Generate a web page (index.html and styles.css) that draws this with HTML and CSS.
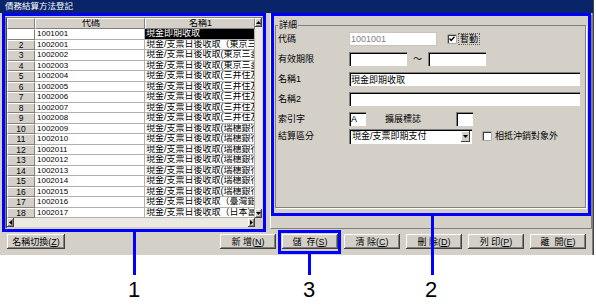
FILE: index.html
```html
<!DOCTYPE html>
<html lang="zh-Hant">
<head>
  <meta charset="UTF-8">
  <title>債務結算方法登記</title>
  <link rel="stylesheet" href="styles.css">
</head>
<body>
<div class="window">
  <div class="titlebar">債務結算方法登記</div>
  <div class="workspace">
    <div class="grid">
      <div class="grid-body">
        <div class="sheet">
          <div class="row head"><div class="cell rh"></div><div class="cell hd code">代碼</div><div class="cell hd name">名稱1</div></div>
          <div class="row current"><div class="cell rh"></div><div class="cell code">1001001</div><div class="cell name">現金即期收取</div></div>
          <div class="row"><div class="cell rh">2</div><div class="cell code">1002001</div><div class="cell name">現金/支票日後收取（東京三菱銀行）</div></div>
          <div class="row"><div class="cell rh">3</div><div class="cell code">1002002</div><div class="cell name">現金/支票日後收取(東京三菱銀行)</div></div>
          <div class="row"><div class="cell rh">4</div><div class="cell code">1002003</div><div class="cell name">現金/支票日後收取(東京三菱銀行)</div></div>
          <div class="row"><div class="cell rh">5</div><div class="cell code">1002004</div><div class="cell name">現金/支票日後收取(三井住友銀行)</div></div>
          <div class="row"><div class="cell rh">6</div><div class="cell code">1002005</div><div class="cell name">現金/支票日後收取(三井住友銀行)</div></div>
          <div class="row"><div class="cell rh">7</div><div class="cell code">1002006</div><div class="cell name">現金/支票日後收取(三井住友銀行)</div></div>
          <div class="row"><div class="cell rh">8</div><div class="cell code">1002007</div><div class="cell name">現金/支票日後收取(三井住友銀行)</div></div>
          <div class="row"><div class="cell rh">9</div><div class="cell code">1002008</div><div class="cell name">現金/支票日後收取(三井住友銀行)</div></div>
          <div class="row"><div class="cell rh">10</div><div class="cell code">1002009</div><div class="cell name">現金/支票日後收取(瑞穗銀行)</div></div>
          <div class="row"><div class="cell rh">11</div><div class="cell code">1002010</div><div class="cell name">現金/支票日後收取(瑞穗銀行)</div></div>
          <div class="row"><div class="cell rh">12</div><div class="cell code">1002011</div><div class="cell name">現金/支票日後收取(瑞穗銀行)</div></div>
          <div class="row"><div class="cell rh">13</div><div class="cell code">1002012</div><div class="cell name">現金/支票日後收取(瑞穗銀行)</div></div>
          <div class="row"><div class="cell rh">14</div><div class="cell code">1002013</div><div class="cell name">現金/支票日後收取(瑞穗銀行)</div></div>
          <div class="row"><div class="cell rh">15</div><div class="cell code">1002014</div><div class="cell name">現金/支票日後收取(瑞穗銀行)</div></div>
          <div class="row"><div class="cell rh">16</div><div class="cell code">1002015</div><div class="cell name">現金/支票日後收取(瑞穗銀行)</div></div>
          <div class="row"><div class="cell rh">17</div><div class="cell code">1002016</div><div class="cell name">現金/支票日後收取（臺灣銀行）</div></div>
          <div class="row"><div class="cell rh">18</div><div class="cell code">1002017</div><div class="cell name">現金/支票日後收取（日本富士銀行）</div></div>
        </div>
        <div class="vscroll">
          <div class="sb-btn"><svg width="5" height="3" viewBox="0 0 5 3"><polygon points="2.5,0 5,3 0,3" fill="#000"/></svg></div>
          <div class="sb-track"></div>
          <div class="sb-btn"><svg width="5" height="3" viewBox="0 0 5 3"><polygon points="0,0 5,0 2.5,3" fill="#000"/></svg></div>
        </div>
      </div>
      <div class="hscroll">
        <div class="sb-btn"><svg width="3" height="5" viewBox="0 0 3 5"><polygon points="3,0 3,5 0,2.5" fill="#000"/></svg></div>
        <div class="sb-track"></div>
        <div class="sb-btn"><svg width="3" height="5" viewBox="0 0 3 5"><polygon points="0,0 3,2.5 0,5" fill="#000"/></svg></div>
        <div class="sb-corner"></div>
      </div>
    </div>

    <div class="detail">
      <fieldset class="group">
        <legend>詳細</legend>
        <div class="field">
          <label class="lbl">代碼</label>
          <input class="box box-code" type="text" value="1001001" readonly>
          <span class="check"><svg width="6" height="6" viewBox="0 0 6 6"><polyline points="0.5,2.5 2.2,4.5 5.5,0.8" fill="none" stroke="#000" stroke-width="1.4"/></svg></span>
          <span class="check-label focus">暫勤</span>
        </div>
        <div class="field">
          <label class="lbl">有效期限</label>
          <input class="box box-date" type="text">
          <span class="tilde">～</span>
          <input class="box box-date" type="text">
        </div>
        <div class="field">
          <label class="lbl">名稱1</label>
          <input class="box box-wide" type="text" value="現金即期收取">
        </div>
        <div class="field">
          <label class="lbl">名稱2</label>
          <input class="box box-wide" type="text">
        </div>
        <div class="field">
          <label class="lbl">索引字</label>
          <input class="box box-char" type="text" value="A">
          <label class="lbl-inline">擴展標誌</label>
          <input class="box box-char" type="text">
        </div>
        <div class="field tight">
          <label class="lbl">結算區分</label>
          <div class="combo">
            <span class="combo-text">現金/支票即期支付</span>
            <span class="combo-btn"><svg width="5" height="3" viewBox="0 0 5 3"><polygon points="0,0 5,0 2.5,3" fill="#000"/></svg></span>
          </div>
          <span class="check"></span>
          <span class="check-label">相抵沖銷對象外</span>
        </div>
      </fieldset>
    </div>
  </div>

  <div class="toolbar">
    <button class="btn btn-switch">名稱切換(<u>Z</u>)</button>
    <div class="actions">
      <button class="btn">新&nbsp;增(<u>N</u>)</button>
      <button class="btn">儲&nbsp;&nbsp;存(<u>S</u>)</button>
      <button class="btn">清&nbsp;除(<u>C</u>)</button>
      <button class="btn">刪&nbsp;除(<u>D</u>)</button>
      <button class="btn">列&nbsp;印(<u>P</u>)</button>
      <button class="btn">離&nbsp;&nbsp;開(<u>E</u>)</button>
    </div>
  </div>
</div>

<!-- annotation callouts -->
<div class="mark mark-grid"></div>
<div class="mark mark-detail"></div>
<div class="mark mark-save"></div>
<div class="stem stem-1"></div>
<div class="stem stem-2"></div>
<div class="stem stem-3"></div>
<div class="num num-1">1</div>
<div class="num num-2">2</div>
<div class="num num-3">3</div>
</body>
</html>
```

FILE: styles.css
```css
* {
  box-sizing: border-box;
}

body {
  margin: 0;
  width: 596px;
  height: 305px;
  position: relative;
  overflow: hidden;
  background-color: #ffffff;
  font-family: "Liberation Sans", "Noto Sans CJK TC", sans-serif;
  font-size: 9px;
  color: #000000;
}

.window {
  width: 594px;
  height: 255px;
  background-color: #d4d0c8;
  border-right: 1px solid #404040;
  box-shadow: inset -1px 0 #808080;
}

.titlebar {
  height: 13px;
  padding-left: 5px;
  background-color: #0a246a;
  color: #ffffff;
  font-size: 8.5px;
  line-height: 13px;
}

.workspace {
  display: flex;
  align-items: flex-start;
  height: 216px;
  padding-left: 5px;
}

/* Grid */
.grid {
  margin-top: 4px;
  width: 258px;
  height: 211px;
  padding: 1px 1px 1px 2px;
  background-color: #ffffff;
  box-shadow: inset 1px 1px #808080, inset 2px 0 #404040, inset -1px -1px #d4d0c8;
  display: flex;
  flex-direction: column;
}

.grid-body {
  display: flex;
  height: 200px;
}

.sheet {
  width: 248px;
  overflow: hidden;
}

.row {
  display: flex;
  height: 10.5px;
}

.row.head {
  height: 11px;
}

.cell {
  border-right: 1px solid #b0b0b0;
  border-bottom: 1px solid #b0b0b0;
  padding-left: 2px;
  line-height: 9.5px;
  white-space: nowrap;
  overflow: hidden;
}

.rh {
  width: 28px;
  padding-left: 0;
  text-align: center;
  font-size: 8.5px;
  background-color: #d4d0c8;
  border-top: 1px solid #ffffff;
  border-left: 1px solid #ffffff;
  border-right-color: #808080;
  border-bottom-color: #808080;
  line-height: 8.5px;
}

.code {
  width: 110px;
  font-size: 8px;
}

.name {
  flex: 1;
  padding-left: 1px;
}

.hd {
  text-align: center;
  background-color: #d4d0c8;
  border-top: 1px solid #ffffff;
  border-left: 1px solid #ffffff;
  border-right-color: #808080;
  border-bottom-color: #808080;
  font-size: 9px;
  line-height: 9px;
}

.current .rh {
  background-color: #ffffff;
}

.current .name {
  background-color: #000000;
  color: #ffffff;
}

/* Scrollbars */
.vscroll {
  width: 7px;
  display: flex;
  flex-direction: column;
}

.hscroll {
  height: 9px;
  display: flex;
}

.sb-track {
  flex: 1;
  background-color: #ece9e3;
}

.sb-btn {
  display: flex;
  align-items: center;
  justify-content: center;
  background-color: #d4d0c8;
  box-shadow: inset -1px -1px #404040, inset 1px 1px #ffffff, inset -2px -2px #808080;
}

.vscroll .sb-btn {
  height: 9px;
}

.hscroll .sb-btn {
  width: 7px;
}

.sb-corner {
  width: 7px;
  background-color: #d4d0c8;
}

/* Detail panel */
.detail {
  margin-top: 1px;
  margin-left: 7px;
  width: 322px;
  height: 215px;
  border: 1px solid;
  border-color: #ffffff #808080 #808080 #ffffff;
}

.group {
  margin: 5px 5px 0 4px;
  height: 188px;
  padding: 2px 0 0 2px;
  border: 1px solid #808080;
  box-shadow: 1px 1px 0 #ffffff;
  min-width: 0;
}

.group legend {
  padding: 0 1px;
  line-height: 10px;
}

.field {
  display: flex;
  align-items: center;
  height: 14px;
  margin-bottom: 6px;
  line-height: 10px;
}

.field.tight {
  margin-top: -3px;
}

.lbl {
  width: 71px;
  flex-shrink: 0;
}

.lbl-inline {
  margin-left: 19px;
  width: 71px;
}

.box {
  height: 14px;
  padding: 0 2px;
  border: none;
  outline: none;
  font-family: inherit;
  font-size: 9px;
  color: #000000;
  background-color: #ffffff;
  box-shadow: inset 1px 1px #808080, inset 2px 2px #000000, inset -1px -1px #ffffff;
}

.box-code {
  width: 88px;
  color: #808080;
  box-shadow: inset 0 0 0 1px #c8c4bc;
}

.box-date {
  width: 58px;
}

.box-wide {
  width: 231px;
}

.box-char {
  width: 17px;
}

.tilde {
  width: 21px;
  text-align: center;
}

.check {
  width: 8px;
  height: 8px;
  margin-left: 11px;
  display: flex;
  align-items: center;
  justify-content: center;
  background-color: #ffffff;
  box-shadow: inset 1px 1px #404040, 0 0 0 0.5px #808080;
}

.check-label {
  margin-left: 3px;
  padding: 0 1px;
}

.focus {
  outline: 1px dotted #606060;
}

.combo {
  width: 123px;
  height: 15px;
  display: flex;
  align-items: center;
  padding: 2px 2px 2px 3px;
  background-color: #ffffff;
  box-shadow: inset 1px 1px #808080, inset 2px 2px #000000, inset -1px -1px #ffffff;
}

.combo-text {
  flex: 1;
}

.combo-btn {
  width: 9px;
  height: 11px;
  display: flex;
  align-items: center;
  justify-content: center;
  background-color: #d4d0c8;
  box-shadow: inset -1px -1px #404040, inset 1px 1px #ffffff;
}

/* Buttons */
.toolbar {
  display: flex;
  padding: 5px 7px 0 7px;
}

.actions {
  margin-left: auto;
  display: flex;
  gap: 6px;
}

.btn {
  width: 56px;
  height: 15px;
  padding: 0;
  border: none;
  background-color: #d4d0c8;
  box-shadow: inset -1px -1px #404040, inset 1px 1px #ffffff, inset -2px -2px #808080;
  font-family: "Liberation Sans", "Noto Sans CJK TC", sans-serif;
  font-size: 9px;
  color: #000000;
}

.btn-switch {
  width: 58px;
}

/* Callouts */
.mark {
  position: absolute;
  border: 3px solid #0000ff;
}

.mark-grid {
  left: 2px;
  top: 13px;
  width: 264px;
  height: 219px;
}

.mark-detail {
  left: 271px;
  top: 13px;
  width: 320px;
  height: 203px;
}

.mark-save {
  left: 278px;
  top: 230px;
  width: 63px;
  height: 24px;
}

.stem {
  position: absolute;
  width: 3px;
  background-color: #0000ff;
}

.stem-1 {
  left: 133px;
  top: 232px;
  height: 43px;
}

.stem-2 {
  left: 431px;
  top: 216px;
  height: 59px;
}

.stem-3 {
  left: 308px;
  top: 254px;
  height: 21px;
}

.num {
  position: absolute;
  top: 279px;
  width: 20px;
  text-align: center;
  font-family: "Liberation Sans", sans-serif;
  font-size: 22px;
  line-height: 22px;
}

.num-1 {
  left: 124px;
}

.num-2 {
  left: 421px;
}

.num-3 {
  left: 299px;
}
```
